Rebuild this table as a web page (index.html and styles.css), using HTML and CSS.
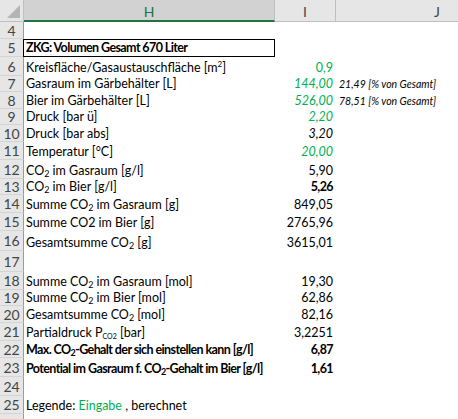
FILE: index.html
```html
<!DOCTYPE html>
<html>
<head>
<meta charset="utf-8">
<link rel="stylesheet" href="styles.css">
</head>
<body>
<div class="sheet">
  <div class="corner"><div class="tri"></div></div>
  <div class="colhead sel">H</div>
  <div class="colhead">I</div>
  <div class="colhead colj">J</div>

  <div class="rh">4</div><div class="c"></div><div class="c"></div><div class="c"></div>
  <div class="rh">5</div><div class="c boxed b"><span>ZKG: Volumen Gesamt 670 Liter</span></div><div class="c"></div><div class="c"></div>
  <div class="rh">6</div><div class="c"><span>Kreisfläche/Gasaustauschfläche [m<sup>2</sup>]</span></div><div class="c num green"><span>0,9</span></div><div class="c"></div>
  <div class="rh">7</div><div class="c"><span>Gasraum im Gärbehälter [L]</span></div><div class="c num green i"><span>144,00</span></div><div class="c note"><span>21,49 [% von Gesamt]</span></div>
  <div class="rh">8</div><div class="c"><span>Bier im Gärbehälter [L]</span></div><div class="c num green i"><span>526,00</span></div><div class="c note"><span>78,51 [% von Gesamt]</span></div>
  <div class="rh">9</div><div class="c"><span>Druck [bar ü]</span></div><div class="c num green i"><span>2,20</span></div><div class="c"></div>
  <div class="rh">10</div><div class="c"><span>Druck [bar abs]</span></div><div class="c num i"><span>3,20</span></div><div class="c"></div>
  <div class="rh">11</div><div class="c"><span>Temperatur [°C]</span></div><div class="c num green i"><span>20,00</span></div><div class="c"></div>
  <div class="rh">12</div><div class="c"><span>CO<sub>2</sub> im Gasraum [g/l]</span></div><div class="c num"><span>5,90</span></div><div class="c"></div>
  <div class="rh">13</div><div class="c"><span>CO<sub>2</sub> im Bier [g/l]</span></div><div class="c num b"><span>5,26</span></div><div class="c"></div>
  <div class="rh">14</div><div class="c"><span>Summe CO<sub>2</sub> im Gasraum [g]</span></div><div class="c num"><span>849,05</span></div><div class="c"></div>
  <div class="rh">15</div><div class="c"><span>Summe CO2 im Bier [g]</span></div><div class="c num"><span>2765,96</span></div><div class="c"></div>
  <div class="rh">16</div><div class="c"><span>Gesamtsumme CO<sub>2</sub> [g]</span></div><div class="c num"><span>3615,01</span></div><div class="c"></div>
  <div class="rh">17</div><div class="c"></div><div class="c"></div><div class="c"></div>
  <div class="rh">18</div><div class="c"><span>Summe CO<sub>2</sub> im Gasraum [mol]</span></div><div class="c num"><span>19,30</span></div><div class="c"></div>
  <div class="rh">19</div><div class="c"><span>Summe CO<sub>2</sub> im Bier [mol]</span></div><div class="c num"><span>62,86</span></div><div class="c"></div>
  <div class="rh">20</div><div class="c"><span>Gesamtsumme CO<sub>2</sub> [mol]</span></div><div class="c num"><span>82,16</span></div><div class="c"></div>
  <div class="rh">21</div><div class="c"><span>Partialdruck P<sub class="small">CO2</sub> [bar]</span></div><div class="c num"><span>3,2251</span></div><div class="c"></div>
  <div class="rh">22</div><div class="c b"><span>Max. CO<sub>2</sub>-Gehalt der sich einstellen kann [g/l]</span></div><div class="c num b"><span>6,87</span></div><div class="c"></div>
  <div class="rh">23</div><div class="c b"><span>Potential im Gasraum f. CO<sub>2</sub>-Gehalt im Bier [g/l]</span></div><div class="c num b"><span>1,61</span></div><div class="c"></div>
  <div class="rh">24</div><div class="c"></div><div class="c"></div><div class="c"></div>
  <div class="rh">25</div><div class="c"><span>Legende: <span class="green">Eingabe</span> , berechnet</span></div><div class="c"></div><div class="c"></div>
  <div class="rh"></div><div class="c"></div><div class="c"></div><div class="c"></div>
</div>
</body>
</html>
```
FILE: styles.css
```css
html, body {
  margin: 0;
  padding: 0;
  background: #ffffff;
}
body {
  width: 458px;
  height: 419px;
  overflow: hidden;
  font-family: Lato, "Open Sans", sans-serif;
  font-size: 12.5px;
  color: #000;
}
.sheet {
  display: grid;
  grid-template-columns: 24px 251px 61px 122px;
  grid-template-rows: 22px 17px 18px 19px 16px 17px 16px 17px 18px 19px 16px 18px 18px 20px 21px 18px 16px 17px 18px 17px 19px 19px 18px 20px;
}
.corner {
  background: #e6e6e6;
  border-right: 1px solid #bfbfbf;
  border-bottom: 1px solid #bfbfbf;
  position: relative;
}
.tri {
  position: absolute;
  right: 3px;
  bottom: 3px;
  width: 0;
  height: 0;
  border-left: 13px solid transparent;
  border-bottom: 13px solid #b4b4b4;
}
.colhead {
  background: #e6e6e6;
  border-right: 1px solid #bfbfbf;
  border-bottom: 1px solid #bfbfbf;
  display: flex;
  align-items: center;
  justify-content: center;
  font-size: 14px;
  color: #444;
  padding-top: 2px;
}
.colhead.sel {
  background: #d2d2d2;
  border-bottom: 2px solid #217346;
  color: #217346;
}
.colj {
  justify-content: flex-start;
  padding-left: 98px;
  border-right: none;
}
.rh {
  background: #e6e6e6;
  border-right: 1px solid #9b9b9b;
  border-bottom: 1px solid #d4d4d4;
  display: flex;
  align-items: center;
  justify-content: center;
  font-size: 14px;
  color: #444;
}
.c {
  display: flex;
  align-items: flex-end;
  padding: 0 2px 0 2px;
  white-space: nowrap;
  min-width: 0;
  line-height: 16px;
}
.num {
  justify-content: flex-end;
  padding-right: 3px;
}
.boxed {
  border: 1px solid #000;
  margin-left: -1px;
}
.b {
  font-weight: bold;
  letter-spacing: -0.6px;
}
.i { font-style: italic; }
.green { color: #00b050; }
.note {
  font-style: italic;
  font-size: 10.5px;
  padding-left: 3px;
}
sup {
  font-size: 8px;
  vertical-align: 5px;
  line-height: 0;
}
sub {
  font-size: 9px;
  vertical-align: -2px;
  line-height: 0;
}
sub.small { font-size: 7px; }
```
